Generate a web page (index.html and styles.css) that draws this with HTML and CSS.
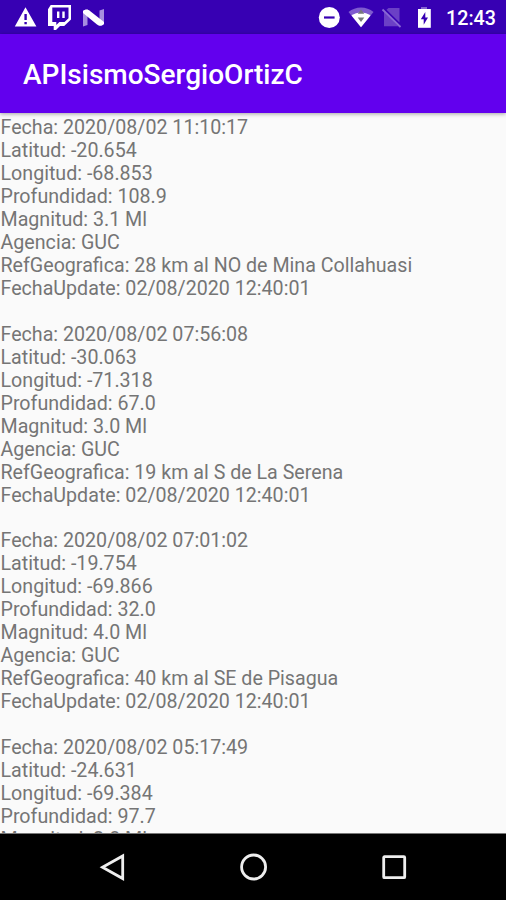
FILE: index.html
```html
<!DOCTYPE html>
<html lang="es">
<head>
  <meta charset="UTF-8">
  <meta name="viewport" content="width=device-width, initial-scale=1.0">
  <title>APIsismoSergioOrtizC</title>
  <link rel="stylesheet" href="styles.css">
</head>
<body>
  <div class="screen">
    <!-- Status Bar -->
    <div class="status-bar">
      <svg class="status-icons" width="110" height="34" viewBox="0 0 110 34">
        <path fill="#fff" fill-rule="evenodd" d="M25.5 7.3L36.4 26.5H14.8ZM24.4 14V20H26.8V14ZM24.4 21.9V24.2H26.8V21.9Z"/>
        <path fill="#fff" fill-rule="evenodd" d="M50.7 5H71V19.5L64.2 26H60L56 30H53.7V26H48V9.2ZM52.3 7.5V22H56.3V25L59.4 22H64.5L68.5 18.3V7.5ZM57 11.5H59.4V18H57ZM62.3 11.5H64.7V18H62.3Z"/>
        <path fill="#a68edf" d="M83 11L87.5 9.5V25L83 26.5ZM99.5 10.5L104 9V24L99.5 25.5Z"/>
        <path fill="#fff" d="M83 11C85 9 88 9 90 11L104 22V24C102 26.5 99 26 97 24.5L83 13Z"/>
      </svg>
      <svg class="status-icons" width="140" height="34" viewBox="310 0 140 34">
        <circle cx="329.3" cy="17.5" r="10.5" fill="#fff"/>
        <path d="M324 17.5H334.6" stroke="#3700b3" stroke-width="2.2"/>
        <path fill="#7f5bcf" d="M348.5 12C355.5 6 366.5 6 373.5 12L361 27.3Z"/>
        <path fill="#fff" d="M351.5 15.6C357 11.3 365 11.3 370.5 15.6L361 27.3Z"/>
        <path fill="#77777c" d="M357.7 13.7L361 9.5L364.3 13.7ZM357.7 17.5H364.3L361 22Z"/>
        <path fill="#6b40c6" d="M388.5 8H399.5V22.5L386.5 9.8ZM384 11.8L398.5 26.3H384Z"/>
        <path d="M382.5 9.5L400.5 27" stroke="#8a68d5" stroke-width="1.8"/>
        <path fill="#8563d0" d="M421 7H427V10H421Z"/>
        <path fill="#fff" d="M418 9H430.8V27.8H418Z"/>
        <path fill="#3700b3" d="M425.3 12L420.8 19.2H423.7V24.7L428 17.4H425.3Z"/>
      </svg>
      <span class="clock">12:43</span>
    </div>

    <!-- App Bar -->
    <div class="app-bar">
      <h1>APIsismoSergioOrtizC</h1>
    </div>

    <!-- Records -->
    <div class="content">
      <pre class="records">Fecha: 2020/08/02 11:10:17
Latitud: -20.654
Longitud: -68.853
Profundidad: 108.9
Magnitud: 3.1 Ml
Agencia: GUC
RefGeografica: 28 km al NO de Mina Collahuasi
FechaUpdate: 02/08/2020 12:40:01

Fecha: 2020/08/02 07:56:08
Latitud: -30.063
Longitud: -71.318
Profundidad: 67.0
Magnitud: 3.0 Ml
Agencia: GUC
RefGeografica: 19 km al S de La Serena
FechaUpdate: 02/08/2020 12:40:01

Fecha: 2020/08/02 07:01:02
Latitud: -19.754
Longitud: -69.866
Profundidad: 32.0
Magnitud: 4.0 Ml
Agencia: GUC
RefGeografica: 40 km al SE de Pisagua
FechaUpdate: 02/08/2020 12:40:01

Fecha: 2020/08/02 05:17:49
Latitud: -24.631
Longitud: -69.384
Profundidad: 97.7
Magnitud: 2.8 Ml</pre>
    </div>

    <!-- Navigation Bar -->
    <div class="nav-bar">
      <svg width="28" height="30" viewBox="0 0 28 30">
        <path d="M23.7 4V26.5L3.5 15.3Z"/>
      </svg>
      <svg width="28" height="30" viewBox="0 0 28 30">
        <circle cx="14.6" cy="15" r="12"/>
      </svg>
      <svg width="28" height="30" viewBox="0 0 28 30">
        <rect x="3.7" y="4.7" width="21" height="21" rx="0.8"/>
      </svg>
    </div>
  </div>
</body>
</html>
```

FILE: styles.css
```css
/* General Styles */
body {
  font-family: Roboto, 'Liberation Sans', sans-serif;
  margin: 0;
  background: #fafafa;
}

.screen {
  display: flex;
  flex-direction: column;
  width: 506px;
  height: 900px;
  overflow: hidden;
}

/* Status Bar */
.status-bar {
  display: flex;
  flex: none;
  height: 34px;
  background: #3700b3;
  color: #fff;
}

.status-icons {
  flex: none;
}

.status-icons + .status-icons {
  margin-left: auto;
}

.clock {
  width: 56px;
  text-indent: -4px;
  font-size: 19.7px;
  font-weight: 500;
  line-height: 37px;
  white-space: nowrap;
}

/* App Bar */
.app-bar {
  display: flex;
  align-items: center;
  flex: none;
  height: 79px;
  padding-left: 23px;
  background: #6200ee;
  box-shadow: 0 1px 4px rgba(0, 0, 0, 0.35);
  z-index: 1;
}

.app-bar h1 {
  margin: 2px 0 0;
  color: #fff;
  font-size: 28px;
  font-weight: 500;
  line-height: 34px;
}

/* Records */
.content {
  flex: 1;
  min-height: 0;
  overflow: hidden;
}

.records {
  margin: 0;
  padding: 4px 0 0 0.5px;
  font-family: inherit;
  font-size: 19.65px;
  line-height: 22.963px;
  color: #757575;
}

/* Navigation Bar */
.nav-bar {
  display: flex;
  justify-content: center;
  align-items: center;
  gap: 112.5px;
  flex: none;
  box-sizing: border-box;
  height: 67px;
  border-top: 1px solid #777;
  background: #000;
}

.nav-bar svg {
  fill: none;
  stroke: #eee;
  stroke-width: 2.8;
}
```
